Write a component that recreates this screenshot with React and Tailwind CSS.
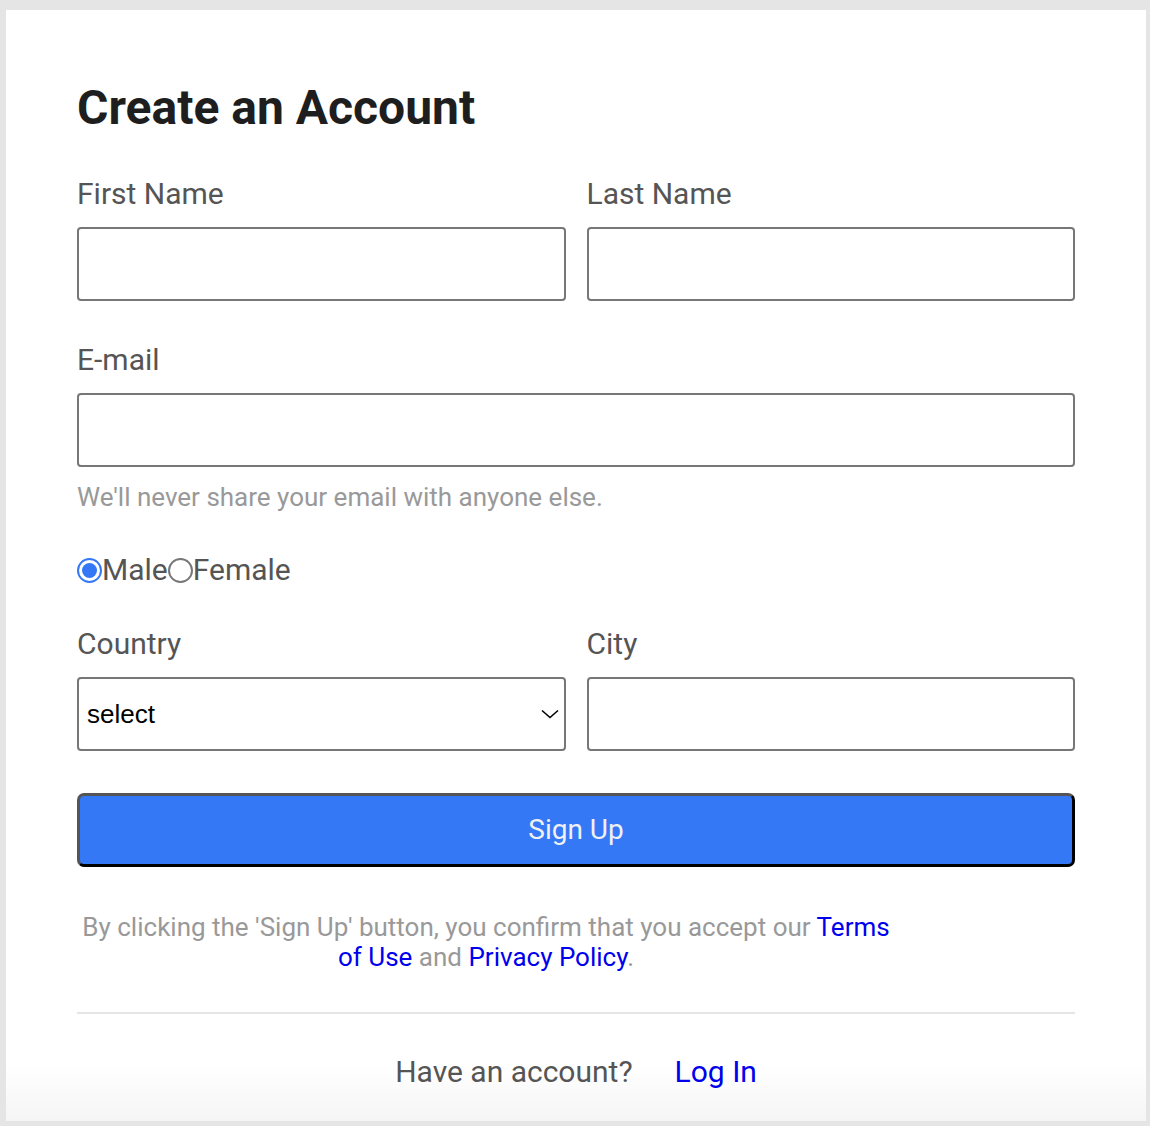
import React from 'react';

function Field({ label, children }) {
  return (
    <div className="flex flex-col">
      <label className="text-[30px] leading-[36px] text-[#555] mb-[15px]">{label}</label>
      {children}
    </div>
  );
}

function TextInput() {
  return <input type="text" className="h-[74px] w-full rounded-[4px] border-2 border-[#777] bg-white px-3 outline-none" />;
}

function Radio({ checked, label }) {
  return (
    <label className="flex items-center">
      {checked ? (
        <span className="w-[25px] h-[25px] rounded-full border-2 border-[#3478f6] flex items-center justify-center">
          <span className="w-[15px] h-[15px] rounded-full bg-[#3478f6]" />
        </span>
      ) : (
        <span className="w-[25px] h-[25px] rounded-full border-2 border-[#777]" />
      )}
      <span>{label}</span>
    </label>
  );
}

export default function App() {
  return (
    <div className="min-h-screen bg-[#e5e5e5] pt-[10px] pl-[6px] pr-[4px] pb-[6px]" style={{ fontFamily: 'Roboto, "Noto Sans", sans-serif' }}>
      <div className="bg-linear-to-b from-white from-[95%] to-[#f5f5f5] px-[71px] pt-[69px] pb-[31px]">
        <h1 className="text-[48px] leading-[58px] font-bold text-[#1e1e1e] mb-[39px]">Create an Account</h1>

        <div className="grid grid-cols-2 gap-x-[21px]">
          <Field label="First Name"><TextInput /></Field>
          <Field label="Last Name"><TextInput /></Field>
        </div>

        <div className="mt-[41px]">
          <Field label="E-mail"><TextInput /></Field>
          <p className="mt-[15px] text-[26px] leading-[30px] text-[#999]">We'll never share your email with anyone else.</p>
        </div>

        <div className="mt-[40px] flex text-[30px] leading-[36px] text-[#555]">
          <Radio checked label="Male" />
          <Radio label="Female" />
        </div>

        <div className="mt-[38px] grid grid-cols-2 gap-x-[21px]">
          <Field label="Country">
            <div className="relative">
              <select className="h-[74px] w-full appearance-none rounded-[4px] border-2 border-[#777] bg-white pl-[8px] text-[26px] text-black outline-none" style={{ fontFamily: '"Liberation Sans", Arial, sans-serif' }}>
                <option>select</option>
              </select>
              <svg className="pointer-events-none absolute right-[7px] top-1/2 -translate-y-1/2" width="18" height="10" viewBox="0 0 18 10" fill="none" stroke="#000" strokeWidth="1.6">
                <path d="M1 1.5l8 7 8-7" />
              </svg>
            </div>
          </Field>
          <Field label="City"><TextInput /></Field>
        </div>

        <button className="mt-[42px] h-[74px] w-full rounded-[7px] border-[3px] border-t-[#555] border-l-[#555] border-r-black border-b-black bg-[#3478f6] text-[28px] text-[#f0f0f0]">
          Sign Up
        </button>

        <p className="mt-[45px] w-[818px] text-center text-[26px] leading-[30px] text-[#999]">
          By clicking the 'Sign Up' button, you confirm that you accept our <a className="text-[#0000ee]">Terms of Use</a> and <a className="text-[#0000ee]">Privacy Policy</a>.
        </p>

        <div className="mt-[40px] h-[2px] bg-[#e5e5e5]" />

        <div className="mt-[40px] flex justify-center items-center gap-[42px] text-[30px] leading-[36px]">
          <span className="text-[#555]">Have an account?</span>
          <a className="text-[#0000ee]">Log In</a>
        </div>
      </div>
    </div>
  );
}
